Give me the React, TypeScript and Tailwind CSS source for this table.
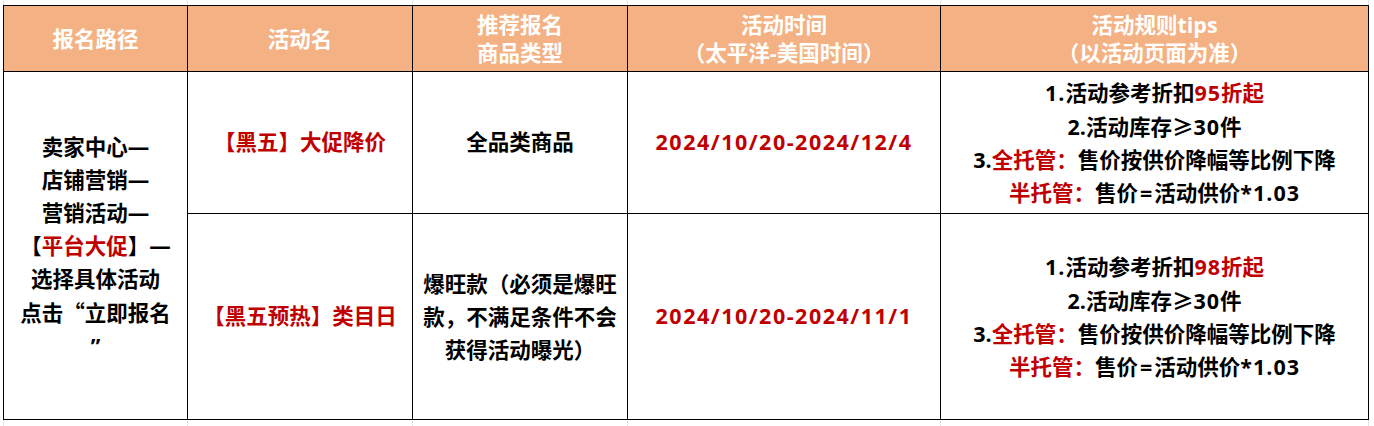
const RED = 'text-[#C00000]';

function GridStrip({ h }: { h: string }) {
  // faint spreadsheet gridlines outside the table
  return (
    <div className={`flex ${h}`}>
      <div className="w-[4px] border-r border-[#e3e3e3]" />
      <div className="w-[184px] border-r border-[#e3e3e3]" />
      <div className="w-[225px] border-r border-[#e3e3e3]" />
      <div className="w-[215px] border-r border-[#e3e3e3]" />
      <div className="w-[313px] border-r border-[#e3e3e3]" />
      <div className="w-[428px] border-r border-[#e3e3e3]" />
    </div>
  );
}

function Tips({ discount }: { discount: string }) {
  return (
    <div className="leading-[33px] text-center">
      <div>
        <span className="tracking-[1px]">1.</span>活动参考折扣
        <span className={`${RED} tracking-[1px]`}>{discount}</span>
        <span className={RED}>折起</span>
      </div>
      <div>
        2.活动库存<span className="font-['Noto_Sans_CJK_SC',sans-serif]">≥</span>
        <span className="tracking-[1px]">30</span>件
      </div>
      <div>
        3.<span className={RED}>全托管：</span>售价按供价降幅等比例下降
      </div>
      <div>
        <span className={RED}>半托管：</span>售价<span className="px-[2px]">=</span>活动供价
        <span className="tracking-[1px]">*1.03</span>
      </div>
    </div>
  );
}

export default function App() {
  const head = 'bg-[#F4B183] text-white border-r border-b border-black flex flex-col items-center justify-center leading-[28px]';
  const cell = 'border-r border-b border-black flex flex-col items-center justify-center text-center';

  return (
    <div className="w-[1374px] h-[426px] bg-white overflow-hidden font-['Open_Sans','Noto_Sans_CJK_SC',sans-serif] font-bold text-[21.5px] text-black">
      <GridStrip h="h-[5px]" />
      <div className="flex">
        <div className="w-[3px]" />
        <div className="grid grid-cols-[184px_225px_215px_313px_428px] grid-rows-[66px_142px_206px] border-l border-t border-black">
          <div className={head}>报名路径</div>
          <div className={head}>活动名</div>
          <div className={head}>
            <div>推荐报名</div>
            <div>商品类型</div>
          </div>
          <div className={head}>
            <div>活动时间</div>
            <div>（太平洋-美国时间）</div>
          </div>
          <div className={head}>
            <div>活动规则tips</div>
            <div>（以活动页面为准）</div>
          </div>

          <div className={`${cell} row-span-2 leading-[33px]`}>
            <div>卖家中心—</div>
            <div>店铺营销—</div>
            <div>营销活动—</div>
            <div>
              【<span className={RED}>平台大促</span>】—
            </div>
            <div>选择具体活动</div>
            <div>
              点击<span className="font-['Noto_Sans_CJK_SC',sans-serif]">“</span>立即报名
            </div>
            <div>”</div>
          </div>
          <div className={`${cell} ${RED}`}>【黑五】大促降价</div>
          <div className={cell}>全品类商品</div>
          <div className={`${cell} ${RED} tracking-[1.5px]`}>2024/10/20-2024/12/4</div>
          <div className={cell}>
            <Tips discount="95" />
          </div>

          <div className={`${cell} ${RED}`}>【黑五预热】类目日</div>
          <div className={`${cell} leading-[33px]`}>
            <div>爆旺款（必须是爆旺</div>
            <div>款，不满足条件不会</div>
            <div>获得活动曝光）</div>
          </div>
          <div className={`${cell} ${RED} tracking-[1.5px]`}>2024/10/20-2024/11/1</div>
          <div className={cell}>
            <Tips discount="98" />
          </div>
        </div>
      </div>
      <GridStrip h="h-[8px]" />
    </div>
  );
}
